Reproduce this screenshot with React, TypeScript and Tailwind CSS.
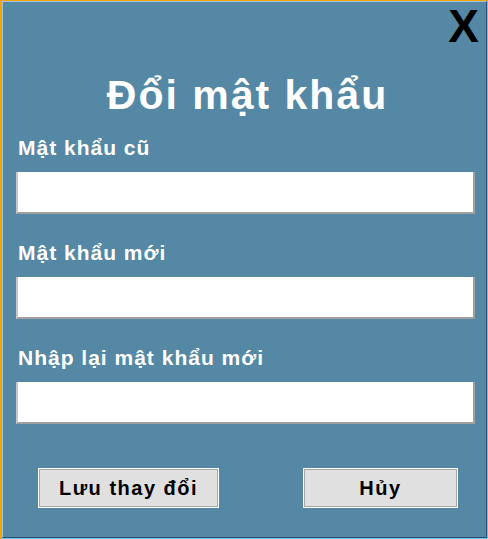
import React from "react";

const font = { fontFamily: '"Liberation Sans", Arial, sans-serif' };

function Field({ label, mt }: { label: string; mt: string }) {
  return (
    <div className={`flex flex-col ${mt}`}>
      <div className="text-[21px] leading-[20px] font-bold text-white tracking-[1px] pl-[2px]">{label}</div>
      <input
        type="password"
        className="mt-[14px] h-[42px] w-full bg-white border-l-2 border-l-[#c8c8c8] border-r-2 border-b-2 border-r-[#a0a0a0] border-b-[#a0a0a0] outline-none"
      />
    </div>
  );
}

export default function App() {
  return (
    <div
      style={font}
      className="w-[488px] h-[539px] border-t border-l-2 border-t-[#f5a300] border-l-[#f5a300] border-r border-b border-r-[#66c4f2] border-b-[#66c4f2] bg-[#5488a4]"
    >
      <div className="w-full h-full border border-t-[#9dc6dc] border-l-[#9dc6dc] border-r-[#2d4f68] border-b-[#2d4f68] flex flex-col pl-[13px] pr-[11px]">
        <div className="flex justify-end pt-[2px] -mr-[4px]">
          <button className="text-[46px] leading-[44px] font-bold text-black">X</button>
        </div>
        <div className="mt-[29px] text-center text-[41px] leading-[36px] font-bold text-white tracking-[2px] pl-[4px]">
          Đổi mật khẩu
        </div>
        <Field label="Mật khẩu cũ" mt="mt-[25px]" />
        <Field label="Mật khẩu mới" mt="mt-[29px]" />
        <Field label="Nhập lại mật khẩu mới" mt="mt-[29px]" />
        <div className="mt-[44px] flex">
          <button className="ml-[22px] w-[181px] h-[40px] bg-[#e0e0e0] border border-white shadow-[inset_0_0_0_1px_#a8a8a8] text-[20px] font-bold text-black tracking-[1.5px]">
            Lưu thay đổi
          </button>
          <button className="ml-[84px] w-[155px] h-[40px] bg-[#e0e0e0] border border-white shadow-[inset_0_0_0_1px_#a8a8a8] text-[20px] font-bold text-black tracking-[1.5px]">
            Hủy
          </button>
        </div>
      </div>
    </div>
  );
}
